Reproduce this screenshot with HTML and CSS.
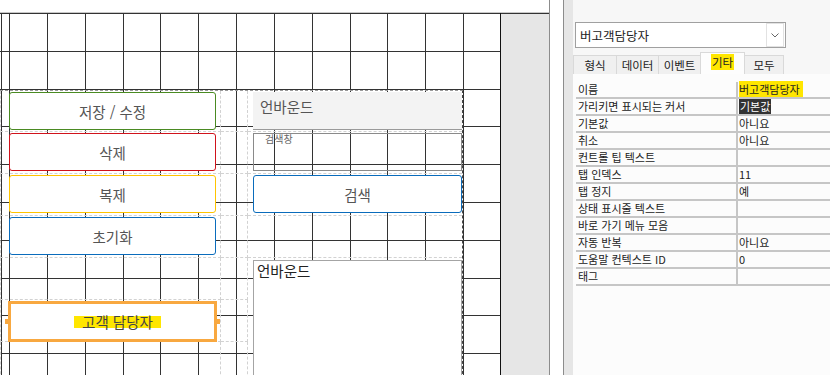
FILE: index.html
```html
<!DOCTYPE html>
<html lang="ko">
<head>
    <meta charset="UTF-8">
    <title>폼 디자인</title>
    <link rel="stylesheet" href="styles.css">
</head>
<body>
    <div class="designer">
        <div class="ruler"></div>
        <div class="workspace">
            <div class="canvas">
                <div class="form">
                    <!-- 1 -->
                    <div class="cell left"><div class="btn green">저장 / 수정</div></div>
                    <div class="cell gap"></div>
                    <div class="cell right"><div class="label">언바운드</div></div>
                    <!-- 2 -->
                    <div class="cell left"><div class="btn red">삭제</div></div>
                    <div class="cell gap"></div>
                    <div class="cell right"><div class="textbox"><span>검색창</span></div></div>
                    <!-- 3 -->
                    <div class="cell left"><div class="btn yellow">복제</div></div>
                    <div class="cell gap"></div>
                    <div class="cell right"><div class="btn blue">검색</div></div>
                    <!-- 4 -->
                    <div class="cell left"><div class="btn blue">초기화</div></div>
                    <div class="cell gap"></div>
                    <div class="cell right"></div>
                    <!-- 5 -->
                    <div class="cell left"></div>
                    <div class="cell gap"></div>
                    <div class="cell right list-cell"><div class="listbox">언바운드</div></div>
                    <!-- 6 -->
                    <div class="cell left"><div class="btn selected"><span class="mark">고객 담당자</span></div></div>
                    <div class="cell gap"></div>
                    <!-- 7 -->
                    <div class="cell left"></div>
                    <div class="cell gap"></div>
                </div>
            </div>
            <div class="gutter"></div>
        </div>
    </div>

    <div class="splitter"></div>

    <div class="panel">
        <div class="panel-edge"></div>
        <div class="panel-body">
            <div class="combo">
                <span class="combo-text">버고객담당자</span>
                <span class="combo-btn">
                    <svg width="8" height="5" viewBox="0 0 8 5"><path d="M0.5 0.5 L4 4 L7.5 0.5" fill="none" stroke="#666" stroke-width="1"/></svg>
                </span>
            </div>
            <div class="tabs">
                <div class="tab w43">형식</div>
                <div class="tab w42">데이터</div>
                <div class="tab w42">이벤트</div>
                <div class="tab w44 active"><span class="mark">기타</span></div>
                <div class="tab w39">모두</div>
            </div>
            <div class="props">
                <div class="row"><div class="name">이름</div><div class="value"><span class="mark">버고객담당자</span></div></div>
                <div class="row"><div class="name">가리키면 표시되는 커서</div><div class="value"><span class="picked">기본값</span></div></div>
                <div class="row"><div class="name">기본값</div><div class="value">아니요</div></div>
                <div class="row"><div class="name">취소</div><div class="value">아니요</div></div>
                <div class="row"><div class="name">컨트롤 팁 텍스트</div><div class="value"></div></div>
                <div class="row"><div class="name">탭 인덱스</div><div class="value">11</div></div>
                <div class="row"><div class="name">탭 정지</div><div class="value">예</div></div>
                <div class="row"><div class="name">상태 표시줄 텍스트</div><div class="value"></div></div>
                <div class="row"><div class="name">바로 가기 메뉴 모음</div><div class="value"></div></div>
                <div class="row"><div class="name">자동 반복</div><div class="value">아니요</div></div>
                <div class="row"><div class="name">도움말 컨텍스트 ID</div><div class="value">0</div></div>
                <div class="row"><div class="name">태그</div><div class="value"></div></div>
            </div>
        </div>
    </div>
</body>
</html>
```

FILE: styles.css
```css
body {
    margin: 0;
    width: 830px;
    height: 375px;
    overflow: hidden;
    display: flex;
    background: #fff;
    font-family: "Noto Sans CJK KR", "Noto Sans", sans-serif;
    color: #222;
}

/* 디자인 영역 */
.designer {
    width: 549px;
    display: flex;
    flex-direction: column;
}

.ruler {
    flex-shrink: 0;
    height: 12px;
    border-bottom: 1px solid #c8c8c8;
    background: #fff;
}

.workspace {
    flex: 1;
    min-height: 0;
    overflow: hidden;
    display: flex;
}

.canvas {
    width: 500px;
    border-right: 1px solid #111;
    background-color: #fff;
    background-image:
        repeating-linear-gradient(90deg, #333 0 1px, transparent 1px 37.85px),
        repeating-linear-gradient(180deg, #333 0 1px, transparent 1px 37.8px);
    background-position: 9px 0, 0 0;
}

.gutter {
    flex: 1;
    background: #e6e6e6;
    border-top: 1px solid #333;
}

/* 폼 레이아웃 */
.form {
    margin-top: 77px;
    width: 462px;
    border-top: 1px dashed #999;
    border-right: 1px dashed #444;
    display: grid;
    grid-template-columns: 221px 27px 214px;
    grid-template-rows: 41px 42px 42px 42px 42px 42px 42px;
}

.cell {
    box-sizing: border-box;
    border-bottom: 1px dashed #d2d2d2;
}

.cell.left {
    grid-column: 1;
    padding: 1px 4px 2px 8px;
    border-left: 1px dashed #d2d2d2;
    border-right: 1px dashed #d2d2d2;
}

.cell.gap {
    grid-column: 2;
    border-right: 1px dashed #d2d2d2;
}

.cell.right {
    grid-column: 3;
    padding: 1px 0 2px 5px;
}

.list-cell {
    grid-row: 5 / span 3;
    border-bottom: none;
}

.btn {
    height: 38px;
    box-sizing: border-box;
    border: 1px solid #888;
    border-radius: 3px;
    background: #fff;
    display: flex;
    align-items: center;
    justify-content: center;
    font-size: 14.5px;
    color: #555;
}

.btn.green { border-color: #4a8a22; }
.btn.red { border-color: #d0121b; }
.btn.yellow { border-color: #ffc400; }
.btn.blue { border-color: #0a6cbc; }

.btn.selected {
    position: relative;
    height: 41px;
    margin: 0 -1px 0 -1px;
    border: 3px solid #f8a840;
    border-radius: 0;
    color: #444;
}

.btn.selected::before,
.btn.selected::after {
    content: "";
    position: absolute;
    top: 15px;
    width: 4px;
    height: 5px;
    background: #f8a840;
}

.btn.selected::before { left: -6px; }
.btn.selected::after { right: -6px; }

.mark {
    background: #ffe600;
    line-height: 12px;
    padding: 0 4px;
}

.btn .mark {
    padding: 0 8px 0 8px;
    margin-left: 10px;
}

.label {
    height: 37px;
    border-bottom: 1px solid #9a9a9a;
    background: #f3f3f3;
    font-size: 14.5px;
    color: #555;
    padding-left: 7px;
    line-height: 30px;
}

.textbox {
    height: 38px;
    box-sizing: border-box;
    border: 1px solid #8a8a8a;
    padding: 0 0 0 11px;
    font-size: 10px;
    line-height: 10px;
    color: #666;
}

.listbox {
    height: 160px;
    margin-top: 1px;
    box-sizing: border-box;
    border: 1px solid #a4a4a4;
    background: #fff;
    padding: 0 0 0 3px;
    font-size: 14.5px;
    line-height: 20px;
    color: #222;
}

/* 분할 막대 */
.splitter {
    width: 13px;
    border-left: 1px solid #8c8c8c;
    background: #fff;
}

/* 속성 창 */
.panel {
    flex: 1;
    display: flex;
    border-left: 1px solid #8c8c8c;
}

.panel-edge {
    width: 9px;
    background: #e6e6e6;
}

.panel-body {
    flex: 1;
    display: flex;
    flex-direction: column;
    background: #f7f7f7;
}

.combo {
    margin: 22px 0 0 2px;
    width: 211px;
    height: 26px;
    box-sizing: border-box;
    border: 1px solid #a0a0a0;
    background: #fff;
    display: flex;
    align-items: center;
    justify-content: space-between;
}

.combo-text {
    padding-left: 4px;
    font-size: 12.5px;
    color: #222;
}

.combo-btn {
    width: 16px;
    height: 22px;
    margin-right: 1px;
    border: 1px solid #e2e2e2;
    display: flex;
    align-items: center;
    justify-content: center;
}

.tabs {
    margin-top: 4px;
    height: 22px;
    display: flex;
    align-items: flex-end;
}

.tab {
    height: 19px;
    box-sizing: border-box;
    border: 1px solid #d9d9d9;
    border-bottom: none;
    margin-right: -1px;
    background: #f0f0f0;
    font-size: 11.5px;
    line-height: 18px;
    text-align: center;
    color: #222;
}

.tab.active {
    height: 22px;
    background: #fdfdfd;
    position: relative;
}

.tab .mark {
    padding: 0 1px;
    line-height: 14px;
}

.w43 { width: 44px; }
.w42 { width: 43px; }
.w44 { width: 45px; }
.w39 { width: 40px; }

.props {
    flex: 1;
    background: #fcfcfc;
    padding: 8px 0 0 3px;
}

.row {
    display: flex;
    height: 17px;
    box-sizing: border-box;
    border-bottom: 2px solid #c6c6c6;
    font-size: 11px;
    line-height: 15px;
}

.name {
    width: 158px;
    padding-left: 2px;
    border-right: 2px solid #c6c6c6;
    white-space: nowrap;
}

.value {
    flex: 1;
    padding-left: 1px;
    white-space: nowrap;
}

.value .mark {
    padding: 0 3px 0 0;
}

.picked {
    display: inline-block;
    background: #333;
    color: #fff;
    padding: 0 1px;
}
```
